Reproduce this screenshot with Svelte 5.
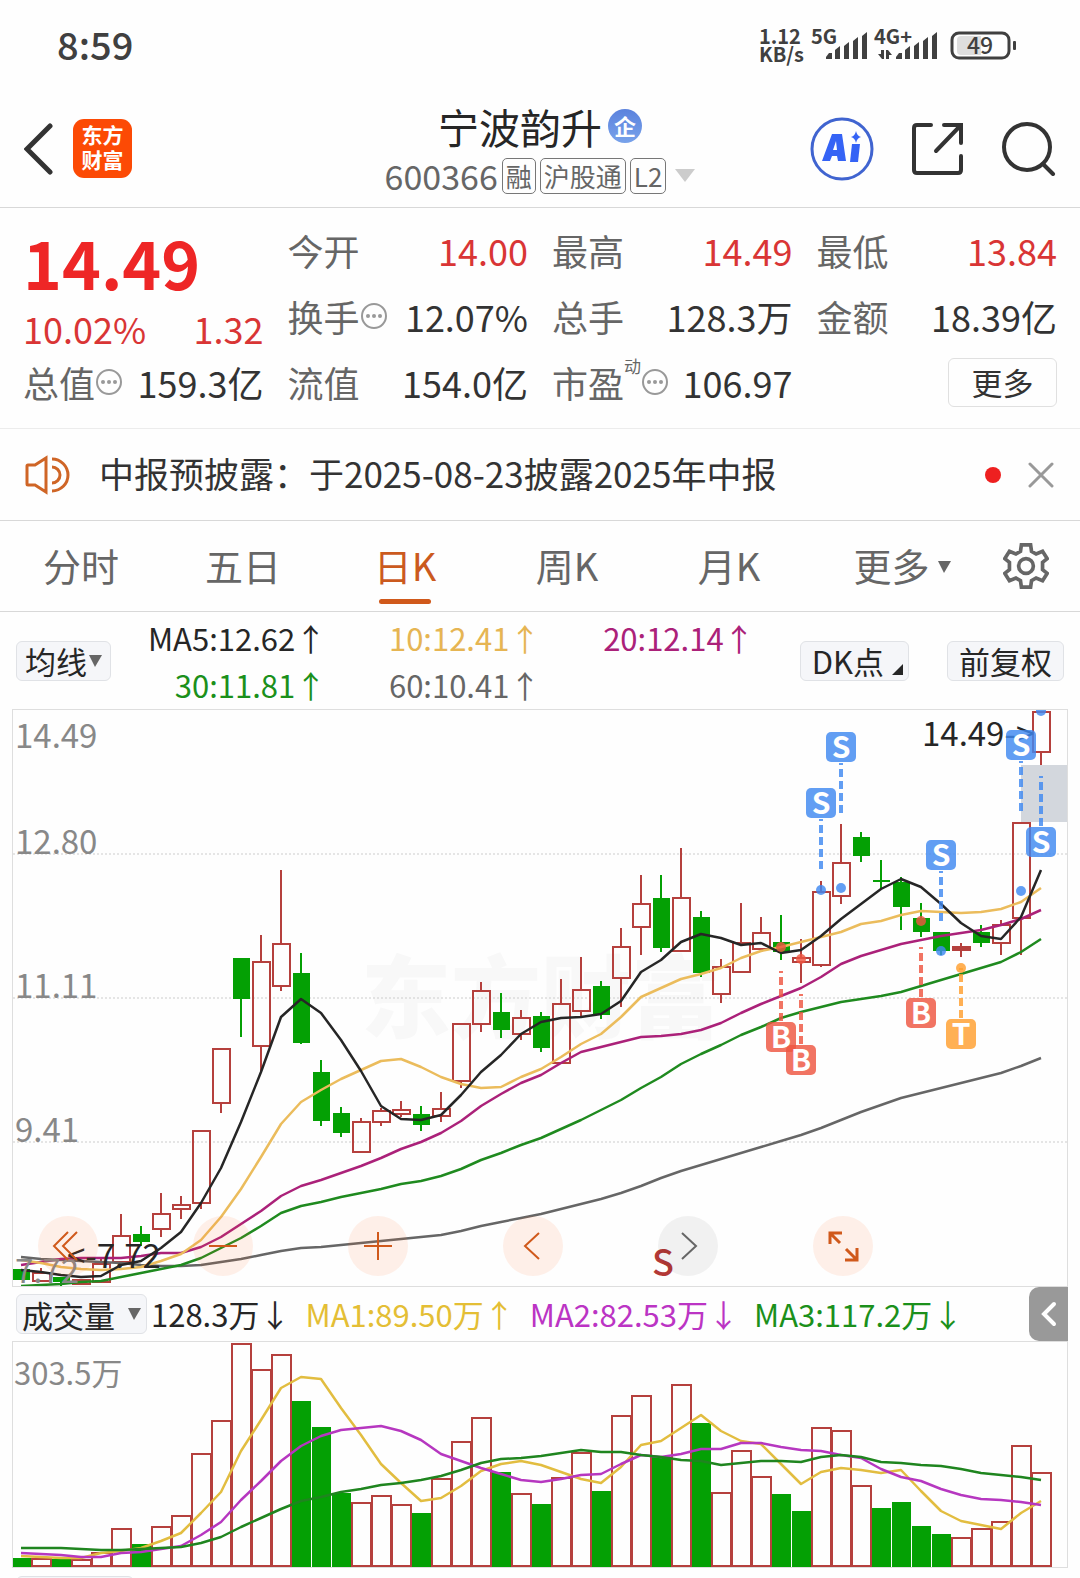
<script lang="ts">
	type Candle = [up: number, high: number, top: number, bottom: number, low: number];

	interface Marker {
		i: number;
		kind: 'S' | 'B' | 'T';
		y: number;
		from: number;
		to: number;
		dot: number;
	}

	// [rising, high, body top, body bottom, low] in chart units
	const candles: Candle[] = [
		[0, 559, 559, 570, 570], [1, 558, 562, 571, 571], [0, 567, 567, 572, 576], [1, 569, 569, 574, 574],
		[1, 548, 553, 572, 572], [1, 504, 525, 552, 552], [0, 516, 524, 532, 536], [1, 483, 503, 519, 527],
		[1, 486, 494, 499, 509], [1, 420, 420, 493, 499], [1, 338, 338, 393, 403], [0, 248, 248, 289, 327],
		[1, 225, 251, 336, 363], [1, 160, 233, 276, 281], [0, 243, 263, 333, 334], [0, 350, 362, 411, 416],
		[0, 397, 403, 423, 427], [1, 408, 411, 442, 442], [1, 398, 400, 412, 416], [1, 391, 399, 404, 407],
		[0, 396, 404, 415, 421], [1, 382, 398, 406, 412], [1, 313, 313, 371, 378], [1, 272, 280, 314, 322],
		[0, 283, 302, 320, 328], [1, 300, 307, 324, 330], [0, 302, 306, 338, 342], [1, 269, 293, 353, 353],
		[1, 247, 279, 301, 306], [0, 271, 276, 305, 309], [1, 218, 236, 268, 297], [1, 165, 193, 217, 245],
		[0, 165, 188, 238, 242], [1, 138, 187, 241, 241], [0, 201, 207, 263, 267], [1, 249, 256, 284, 293],
		[1, 193, 232, 262, 263], [1, 207, 222, 239, 239], [0, 205, 232, 242, 250], [1, 229, 247, 252, 273],
		[1, 171, 181, 255, 257], [1, 114, 152, 186, 194], [0, 122, 127, 146, 152], [0, 150, 170, 172, 179],
		[0, 167, 172, 197, 220], [0, 193, 208, 222, 227], [0, 222, 222, 241, 245], [1, 233, 236, 240, 247],
		[0, 215, 222, 233, 237], [1, 210, 214, 233, 245], [1, 112, 112, 208, 245], [1, 1, 1, 42, 55]
	];

	const priceLines = [
		{
			color: '#666666',
			ys: [547, 549, 550, 551, 552, 553, 555, 556, 556, 555, 552, 549, 545, 541, 538, 537, 535, 533, 531, 529, 527, 525, 521, 516, 512, 508, 504, 499, 494, 489, 483, 476, 468, 461, 455, 449, 443, 437, 431, 425, 418, 410, 402, 395, 388, 383, 378, 373, 368, 363, 356, 348]
		},
		{
			color: '#1f8a1f',
			ys: [576, 575, 574, 572, 571, 567, 563, 559, 555, 548, 538, 528, 516, 503, 496, 492, 487, 483, 479, 474, 471, 466, 459, 450, 443, 435, 428, 419, 410, 400, 390, 378, 367, 354, 344, 335, 325, 317, 308, 302, 297, 292, 289, 286, 282, 276, 270, 264, 258, 252, 242, 229]
		},
		{
			color: '#ab2179',
			ys: [555, 552, 549, 548, 548, 548, 546, 543, 543, 537, 527, 514, 501, 486, 476, 470, 463, 456, 448, 439, 432, 423, 411, 396, 384, 373, 365, 353, 342, 337, 332, 327, 326, 324, 320, 313, 303, 294, 286, 278, 267, 254, 246, 240, 234, 230, 226, 223, 220, 215, 209, 200]
		},
		{
			color: '#ebbc5c',
			ys: [550, 553, 557, 559, 560, 559, 557, 551, 544, 530, 507, 479, 447, 414, 392, 380, 369, 360, 351, 349, 357, 367, 374, 378, 377, 367, 359, 347, 334, 324, 307, 287, 278, 269, 264, 258, 248, 241, 237, 232, 227, 222, 214, 211, 205, 201, 202, 203, 202, 199, 192, 178]
		},
		{
			color: '#262626',
			ys: [560, 562, 565, 567, 566, 555, 551, 538, 522, 493, 458, 412, 362, 307, 289, 303, 330, 361, 396, 409, 410, 405, 385, 362, 345, 324, 312, 308, 307, 304, 291, 262, 250, 232, 224, 228, 235, 233, 243, 240, 226, 209, 194, 179, 169, 177, 194, 213, 226, 229, 207, 160]
		}
	];

	const volumeTops = [
		216, 216, 217, 217, 210, 186, 202, 184, 173, 111, 78, 1, 27, 12, 59, 85, 151, 160, 153, 162, 171, 136, 99, 75, 130, 151,
		162, 135, 110, 149, 73, 53, 115, 42, 81, 150, 108, 134, 152, 169, 85, 88, 143, 166, 160, 184, 192, 195, 186, 179, 103, 130
	];

	// volume bars are coloured against the previous close, so some differ from their candle
	const fallingVolume = [0, 2, 6, 14, 15, 16, 20, 24, 26, 29, 32, 34, 38, 39, 43, 44, 45, 46];

	const volumeLines = [
		{
			color: '#e2bd40',
			ys: [214, 215, 216, 216, 211, 209, 206, 199, 191, 171, 150, 109, 78, 46, 35, 37, 66, 93, 122, 141, 159, 156, 144, 129, 122, 119, 123, 130, 137, 141, 125, 103, 99, 86, 73, 89, 99, 102, 122, 142, 130, 126, 128, 131, 128, 149, 169, 179, 183, 187, 171, 159]
		},
		{
			color: '#b637c0',
			ys: [211, 212, 213, 215, 215, 211, 210, 207, 204, 193, 180, 158, 139, 119, 104, 94, 88, 86, 84, 89, 98, 112, 119, 126, 132, 138, 140, 137, 133, 132, 122, 113, 115, 112, 107, 107, 101, 101, 105, 108, 109, 113, 116, 127, 135, 139, 147, 153, 157, 158, 160, 163]
		},
		{
			color: '#1f851f',
			ys: [206, 206, 206, 207, 208, 208, 207, 206, 205, 201, 195, 185, 176, 167, 159, 155, 150, 147, 143, 141, 138, 134, 128, 121, 117, 116, 114, 111, 108, 110, 110, 113, 115, 118, 119, 123, 121, 119, 119, 120, 115, 113, 115, 120, 121, 123, 124, 127, 131, 133, 135, 138]
		}
	];

	const markers: Marker[] = [
		{ i: 40, kind: 'S', y: 93, from: 109, to: 159, dot: 180 },
		{ i: 41, kind: 'S', y: 37, from: 53, to: 103, dot: 178 },
		{ i: 46, kind: 'S', y: 145, from: 161, to: 211, dot: 241 },
		{ i: 50, kind: 'S', y: 35, from: 51, to: 101, dot: 181 },
		{ i: 51, kind: 'S', y: 132, from: 66, to: 116, dot: 1 },
		{ i: 38, kind: 'B', y: 327, from: 261, to: 311, dot: 237 },
		{ i: 39, kind: 'B', y: 350, from: 284, to: 334, dot: 249 },
		{ i: 45, kind: 'B', y: 303, from: 237, to: 287, dot: 211 },
		{ i: 47, kind: 'T', y: 324, from: 258, to: 308, dot: 258 }
	];

	const markerColors = { S: '#4089f0', B: '#ee5541', T: '#ff9f2e' };

	const stats = [
		{ label: '今开', value: '14.00', up: true },
		{ label: '最高', value: '14.49', up: true },
		{ label: '最低', value: '13.84', up: true },
		{ label: '换手', value: '12.07%', info: true },
		{ label: '总手', value: '128.3万' },
		{ label: '金额', value: '18.39亿' },
		{ label: '总值', value: '159.3亿', info: true },
		{ label: '流值', value: '154.0亿' },
		{ label: '市盈', sup: '动', value: '106.97', info: true }
	];

	const tabs = ['分时', '五日', '日K', '周K', '月K'];
	let activeTab = $state('日K');
	let showNotice = $state(true);

	const x = (i: number) => 8 + i * 20;
	const points = (ys: number[]) => ys.map((y, i) => `${x(i)},${y}`).join(' ');
</script>

<div class="app">
	<div class="status">
		<span class="time">8:59</span>
		<svg width="260" height="52" viewBox="-2 -8 260 52" fill="#404040">
			<g font-size="20" font-weight="700">
				<text x="-1" y="16">1.12</text>
				<text x="-1" y="34">KB/s</text>
				<text x="51" y="16">5G</text>
				<text x="114" y="16">4G+</text>
			</g>
			<path d="M66 31v-2l3-4h3v6zM75 31V22l5-4v13zM84 31V18l5-4v17zM93 31V13l5-4v22zM102 31V8l5-4v27z" />
			<path d="M136 31v-2l3-4h3v6zM145 31V22l5-4v13zM154 31V18l5-4v17zM163 31V13l5-4v22zM172 31V8l5-4v27z" />
			<path d="M124 22v9h-2l-4-5h3v-4zM126 31v-9h2l4 5h-3v4z" />
			<rect x="192" y="5" width="57" height="25" rx="7" fill="none" stroke="#404040" stroke-width="3" />
			<path d="M201 8h20v19h-20q-4 0-4-4V12q0-4 4-4z" fill="#dedede" />
			<rect x="253" y="13" width="3" height="9" rx="1" />
			<text x="220" y="26" font-size="23" font-weight="500" text-anchor="middle">49</text>
		</svg>
	</div>

	<header>
		<div class="side">
			<button class="icon" aria-label="返回">
				<svg width="34" height="54" viewBox="0 0 34 54">
					<path d="M26 4 3 27l23 23" fill="none" stroke="#333" stroke-width="5" stroke-linecap="round" />
				</svg>
			</button>
			<div class="logo">东方<br />财富</div>
		</div>
		<div class="title">
			<h1>宁波韵升<span class="corp">企</span></h1>
			<div class="code">
				<span class="number">600366</span>
				<span class="tag">融</span>
				<span class="tag">沪股通</span>
				<span class="tag">L2</span>
				<svg width="20" height="14" viewBox="0 0 20 14"><path d="M0 0h20L10 13z" fill="#ccc" /></svg>
			</div>
		</div>
		<div class="side actions">
			<button class="icon" aria-label="AI">
				<svg width="64" height="64" viewBox="0 0 64 64">
					<circle cx="32" cy="32" r="30" fill="none" stroke="#4064d0" stroke-width="3" />
					<g fill="#3563f5">
						<path d="M22 17h10l4 27h-8l-1-5h-5l-2 5h-8zM26 24l-3 9h4z" fill-rule="evenodd" />
						<path d="M42 27h8l-2 18h-8z" />
						<path d="M46 14q1 5 5 6-4 1-5 6-1-5-5-6 4-1 5-6z" />
					</g>
				</svg>
			</button>
			<button class="icon" aria-label="分享">
				<svg width="52" height="54" viewBox="0 0 52 54" fill="none" stroke="#333" stroke-width="4" stroke-linecap="round">
					<path d="M19 3H5q-3 0-3 3v42q0 3 3 3h41q3 0 3-3V34M32 3h17v18M49 3 24 29" />
				</svg>
			</button>
			<button class="icon" aria-label="搜索">
				<svg width="54" height="54" viewBox="0 0 54 54" fill="none" stroke="#333" stroke-width="4" stroke-linecap="round">
					<circle cx="25" cy="25" r="23" />
					<path d="m41 42 10 10" />
				</svg>
			</button>
		</div>
	</header>

	<section class="quote">
		<div class="price">
			<strong>14.49</strong>
			<div class="change"><span>10.02%</span><span>1.32</span></div>
		</div>
		{#each stats as stat (stat.label)}
			<div class="stat">
				<span class="label">
					{stat.label}{#if stat.sup}<sup>{stat.sup}</sup>{/if}
					{#if stat.info}
						<svg width="28" height="28" viewBox="0 0 28 28" fill="#999">
							<circle cx="14" cy="14" r="12" fill="none" stroke="#999" stroke-width="2" />
							<circle cx="8" cy="14" r="2" /><circle cx="14" cy="14" r="2" /><circle cx="20" cy="14" r="2" />
						</svg>
					{/if}
				</span>
				<span class:up={stat.up}>{stat.value}</span>
			</div>
		{/each}
		<button class="more">更多</button>
	</section>

	{#if showNotice}
		<div class="notice">
			<svg width="46" height="40" viewBox="0 0 46 40" fill="none" stroke="#cf6526" stroke-width="3">
				<path d="M3 10h7L21 3v34l-11-7H3Q2 30 2 29V11q0-1 1-1zM27 4a16 16 0 0 1 0 32M27 12a8 8 0 0 1 0 16" />
			</svg>
			<a href="#notice">中报预披露：于2025-08-23披露2025年中报</a>
			<span class="dot"></span>
			<button class="icon" aria-label="关闭" onclick={() => (showNotice = false)}>
				<svg width="26" height="26" viewBox="0 0 26 26">
					<path d="m2 2 22 22M24 2 2 24" stroke="#999" stroke-width="3" stroke-linecap="round" />
				</svg>
			</button>
		</div>
	{/if}

	<nav>
		{#each tabs as tab (tab)}
			<button class:active={activeTab === tab} onclick={() => (activeTab = tab)}>{tab}</button>
		{/each}
		<button>更多<svg width="13" height="18" viewBox="0 0 13 18"><path d="M0 6h13L6 18z" fill="#666" /></svg></button>
		<button class="settings" aria-label="设置">
			<svg width="46" height="48" viewBox="-25 -26 50 52" fill="none" stroke="#666" stroke-width="4">
				<path d="M-5-23H5L6-16 11-13 18-16 23-8 18-4V4L23 8 18 16 11 13 6 16 5 23H-5L-6 16-11 13-18 16-23 8-18 4V-4L-23-8-18-16-11-13-6-16z" />
				<circle r="8" />
			</svg>
		</button>
	</nav>

	<div class="averages">
		<button class="chip average">均线<svg width="13" height="12" viewBox="0 0 13 12"><path d="M0 0h13L6 12z" fill="#666" /></svg></button>
		<div class="legend">
			<span class="ma5">MA5:12.62↑</span>
			<span class="ma10">10:12.41↑</span>
			<span class="ma20">20:12.14↑</span>
			<span class="ma30">30:11.81↑</span>
			<span class="ma60">60:10.41↑</span>
		</div>
		<button class="chip dk">DK点<svg width="11" height="11" viewBox="0 0 11 11"><path d="M11 0v11H0z" fill="#262626" /></svg></button>
		<button class="chip">前复权</button>
	</div>

	<div class="chart">
		<svg class="plot" viewBox="0 0 1054 576">
			<text class="watermark" x="348" y="321">东方财富</text>
			{#each [144, 288, 432] as y (y)}
				<line x1="0" x2="1054" y1={y} y2={y} stroke="#ccc" stroke-dasharray="2 2" />
			{/each}
			<rect x={x(50)} y="55" width="46" height="57" fill="#d3d7dd" />

			{#each candles as [up, high, top, bottom, low], i}
				{#if up}
					<g fill="none" stroke="#b5403d" stroke-width="2">
						<path d="M{x(i)} {high}V{top}M{x(i)} {bottom}V{low}" />
						<rect x={x(i) - 8} y={top + 1} width="17" height={bottom - top - 1} fill={bottom - top < 5 ? '#b5403d' : 'none'} />
					</g>
				{:else}
					<g fill="#04a004">
						<rect x={x(i) - 1} y={high} width="2" height={low - high} />
						<rect x={x(i) - 8} y={top} width="17" height={bottom - top} />
					</g>
				{/if}
			{/each}

			{#each priceLines as line (line.color)}
				<polyline points={points(line.ys)} fill="none" stroke={line.color} stroke-width="2.5" stroke-linejoin="round" />
			{/each}

			<g class="axis">
				<text x="2" y="38">14.49</text>
				<text x="2" y="144">12.80</text>
				<text x="2" y="288">11.11</text>
				<text x="2" y="432">9.41</text>
				<text x="2" y="573">7.72</text>
			</g>

			<g class="extreme">
				<text x="54" y="558">&lt;-7.72</text>
				<text x="909" y="36">14.49-&gt;</text>
			</g>

			{#each markers as m (m.i)}
				<g fill={markerColors[m.kind]} fill-opacity="0.82">
					<line x1={x(m.i)} x2={x(m.i)} y1={m.from} y2={m.to} stroke={markerColors[m.kind]} stroke-width="4" stroke-dasharray="8 4" stroke-opacity="0.82" stroke-dashoffset="6" />
					<circle cx={x(m.i)} cy={m.dot} r="5" />
					<rect x={x(m.i) - 15} y={m.y - 15} width="30" height="30" rx="5" />
					<text class="badge" x={x(m.i)} y={m.y + 11}>{m.kind}</text>
				</g>
			{/each}
			<text class="split" x="639" y="566">S</text>
		</svg>

		<div class="controls">
			<button aria-label="快退"><svg viewBox="-30 -30 60 60"><path d="m0-14-14 14L0 14M9-14-5 0 9 14" /></svg></button>
			<button aria-label="缩小"><svg viewBox="-30 -30 60 60"><path d="M-14 0h28" /></svg></button>
			<button aria-label="放大"><svg viewBox="-30 -30 60 60"><path d="M-14 0h28M0-14v28" /></svg></button>
			<button aria-label="左移"><svg viewBox="-30 -30 60 60"><path d="M6-13-8 0 6 13" /></svg></button>
			<button class="muted" aria-label="右移"><svg viewBox="-30 -30 60 60"><path d="M-6-13 8 0-6 13" /></svg></button>
			<button class="expand" aria-label="全屏"><svg viewBox="-30 -30 60 60"><path d="M-13-2v-11h12M-13-13-3-3M14 2v12H2M14 14 3 3" /></svg></button>
		</div>
	</div>

	<div class="volume-head">
		<button class="chip wide">成交量<svg width="13" height="12" viewBox="0 0 13 12"><path d="M0 0h13L6 12z" fill="#666" /></svg></button>
		<div class="values">
			<span class="v0">128.3万↓</span>
			<span class="v1">MA1:89.50万↑</span>
			<span class="v2">MA2:82.53万↓</span>
			<span class="v3">MA3:117.2万↓</span>
		</div>
		<button class="collapse" aria-label="展开">
			<svg width="16" height="26" viewBox="0 0 16 26"><path d="M13 3 3 13l10 10" fill="none" stroke="#fff" stroke-width="4" stroke-linecap="round" /></svg>
		</button>
	</div>

	<div class="chart">
		<svg class="plot" viewBox="0 0 1054 225">
			{#each volumeTops as top, i}
				{#if fallingVolume.includes(i)}
					<rect x={x(i) - 9} y={top} width="19" height={225 - top} fill="#04a004" />
				{:else}
					<rect x={x(i) - 9} y={top + 1} width="19" height={223 - top} fill="none" stroke="#b5403d" stroke-width="2" />
				{/if}
			{/each}
			{#each volumeLines as line (line.color)}
				<polyline points={points(line.ys)} fill="none" stroke={line.color} stroke-width="2.5" stroke-linejoin="round" />
			{/each}
			<text class="volume-max" x="1" y="43">303.5万</text>
		</svg>
	</div>

	<div class="next"><div class="peek"></div></div>
</div>

<style>
	:global(body) {
		margin: 0;
		background: #fefefe;
	}

	.app {
		font-family: 'Noto Sans CJK SC', 'Noto Sans', sans-serif;
		color: #333;
		overflow: hidden;
	}

	svg {
		display: block;
		flex-shrink: 0;
	}

	button {
		font: inherit;
		color: inherit;
		background: none;
		border: 0;
		padding: 0;
		cursor: pointer;
	}

	.status {
		display: flex;
		justify-content: space-between;
		align-items: center;
		height: 92px;
		padding: 0 62px 0 57px;
	}

	.time {
		padding-bottom: 4px;
		font-size: 38px;
		font-weight: 500;
		line-height: 40px;
		color: #404040;
	}

	header {
		display: grid;
		grid-template-columns: 1fr auto 1fr;
		align-items: center;
		height: 116px;
		box-sizing: border-box;
		padding: 0 24px 2px;
		border-bottom: 1px solid #d8d8d8;
	}

	.side {
		display: flex;
		align-items: center;
		gap: 15px;
	}

	.actions {
		justify-content: flex-end;
		gap: 38px;
	}

	.logo {
		width: 59px;
		height: 59px;
		box-sizing: border-box;
		padding-top: 3px;
		border-radius: 11px;
		background: #fc4a05;
		color: #fff;
		font-size: 21px;
		font-weight: 700;
		line-height: 25px;
		text-align: center;
	}

	.title {
		display: flex;
		flex-direction: column;
		align-items: center;
		gap: 9px;
	}

	h1 {
		display: flex;
		align-items: center;
		gap: 6px;
		margin: 0;
		font-size: 41px;
		font-weight: 400;
		line-height: 46px;
		color: #262626;
	}

	.corp {
		width: 34px;
		height: 34px;
		border-radius: 50%;
		background: linear-gradient(#5b82dd, #78a2ea);
		color: #fff;
		font-size: 22px;
		font-weight: 700;
		line-height: 32px;
		text-align: center;
	}

	.code {
		display: flex;
		align-items: center;
		gap: 4px;
		color: #666;
	}

	.code svg {
		margin-left: 5px;
	}

	.number {
		font-size: 34px;
		line-height: 36px;
	}

	.tag {
		padding: 0 3px;
		border: 1px solid #777;
		border-radius: 5px;
		font-size: 26px;
		line-height: 34px;
	}

	.quote {
		display: grid;
		grid-template-columns: repeat(4, 1fr);
		grid-auto-rows: 66px;
		column-gap: 24px;
		padding: 9px 23px 13px;
		border-bottom: 1px solid #ececec;
		font-size: 36px;
		line-height: 66px;
	}

	.price {
		grid-row: span 2;
		color: #d93535;
	}

	.price strong {
		display: block;
		font-size: 66px;
		font-weight: 700;
		line-height: 88px;
		color: #ee2626;
	}

	.change {
		display: flex;
		justify-content: space-between;
		line-height: 46px;
	}

	.stat {
		display: flex;
		justify-content: space-between;
		white-space: nowrap;
	}

	.label {
		display: flex;
		align-items: center;
		color: #666;
	}

	sup {
		align-self: flex-start;
		font-size: 17px;
		line-height: 34px;
	}

	.up {
		color: #d93535;
	}

	.more {
		justify-self: end;
		align-self: center;
		width: 109px;
		height: 49px;
		border: 1px solid #e0e0e0;
		border-radius: 6px;
		font-size: 31px;
		line-height: 44px;
	}

	.notice {
		display: flex;
		align-items: center;
		height: 91px;
		padding: 0 26px 0 25px;
		border-bottom: 1px solid #d8d8d8;
		font-size: 35px;
	}

	.notice a {
		flex: 1;
		margin-left: 28px;
		padding-bottom: 4px;
		color: #333;
		line-height: 50px;
		text-decoration: none;
	}

	.dot {
		width: 16px;
		height: 16px;
		margin-right: 27px;
		border-radius: 50%;
		background: #ee2020;
	}

	nav {
		display: grid;
		grid-template-columns: repeat(5, 162fr) 184fr 64fr;
		height: 90px;
		padding-right: 22px;
		border-bottom: 1px solid #d8d8d8;
		font-size: 38px;
		color: #666;
	}

	nav button {
		position: relative;
		display: flex;
		justify-content: center;
		align-items: center;
		gap: 8px;
		padding-bottom: 4px;
	}

	nav .settings {
		padding: 0;
	}

	nav .active {
		color: #cb5a1e;
	}

	nav .active::after {
		content: '';
		position: absolute;
		bottom: 7px;
		width: 52px;
		height: 5px;
		border-radius: 3px;
		background: #d0591b;
	}

	.averages {
		display: flex;
		align-items: center;
		height: 97px;
		padding: 0 16px;
	}

	.chip {
		display: flex;
		align-items: center;
		gap: 5px;
		box-sizing: border-box;
		height: 40px;
		padding: 0 11px;
		border: 1px solid #e0e2e6;
		border-radius: 6px;
		background: #f5f6f9;
		color: #262626;
		font-size: 31px;
		line-height: 35px;
		white-space: nowrap;
	}

	.average {
		gap: 2px;
		padding: 0 8px;
	}

	.dk {
		gap: 8px;
		margin-right: 38px;
		padding-right: 5px;
	}

	.dk svg {
		align-self: flex-end;
		margin-bottom: 5px;
	}

	.legend {
		flex: 1;
		display: grid;
		grid-template-columns: 215fr 214fr 214fr 45fr;
		font-size: 31px;
		line-height: 47px;
		text-align: right;
	}

	.ma30 {
		grid-column: 1;
	}

	.ma5,
	.v0 {
		color: #262626;
	}

	.ma10 {
		color: #e6b553;
	}

	.ma20 {
		color: #ab2179;
	}

	.ma30 {
		color: #1b901b;
	}

	.ma60 {
		color: #666;
	}

	.chart {
		position: relative;
		margin: 0 12px;
		border: 1px solid #dedede;
	}

	.plot {
		width: 100%;
		height: auto;
	}

	.watermark {
		font-size: 90px;
		font-weight: 900;
		fill: #f8f8f8;
	}

	.axis {
		font-size: 33px;
		fill: #888;
	}

	.extreme {
		font-size: 33px;
		fill: #262626;
	}

	.badge {
		font-size: 30px;
		font-weight: 700;
		text-anchor: middle;
		fill: #fff;
		fill-opacity: 1;
	}

	.split {
		font-size: 36px;
		font-weight: 500;
		fill: #b33936;
	}

	.controls {
		position: absolute;
		left: 25px;
		bottom: 10px;
		display: flex;
		gap: 95px;
	}

	.controls button {
		width: 60px;
		height: 60px;
		border-radius: 50%;
		background: rgba(255, 110, 40, 0.1);
	}

	.controls path {
		fill: none;
		stroke: #d0591b;
		stroke-width: 2;
	}

	.controls .muted {
		background: rgba(0, 0, 0, 0.05);
	}

	.controls .muted path {
		stroke: #666;
	}

	.controls .expand path {
		stroke-width: 3;
	}

	.volume-head {
		display: flex;
		align-items: center;
		height: 54px;
		padding: 0 12px 0 16px;
	}

	.wide {
		gap: 13px;
		padding: 0 5px;
	}

	.values {
		flex: 1;
		display: flex;
		gap: 15px;
		margin-left: 4px;
		font-size: 31px;
		line-height: 50px;
		white-space: nowrap;
	}

	.v1 {
		color: #e4be35;
	}

	.v2 {
		color: #bb34c4;
	}

	.v3 {
		color: #1b901b;
	}

	.collapse {
		display: flex;
		justify-content: center;
		align-items: center;
		width: 39px;
		height: 54px;
		border-radius: 10px 0 0 10px;
		background: #999;
	}

	.volume-max {
		font-size: 31px;
		fill: #888;
	}

	.next {
		height: 10px;
		padding: 8px 16px 0;
		box-sizing: border-box;
		overflow: hidden;
	}

	.peek {
		width: 118px;
		height: 40px;
		box-sizing: border-box;
		border: 1px solid #e0e2e6;
		border-radius: 6px;
		background: #f5f6f9;
	}
</style>
